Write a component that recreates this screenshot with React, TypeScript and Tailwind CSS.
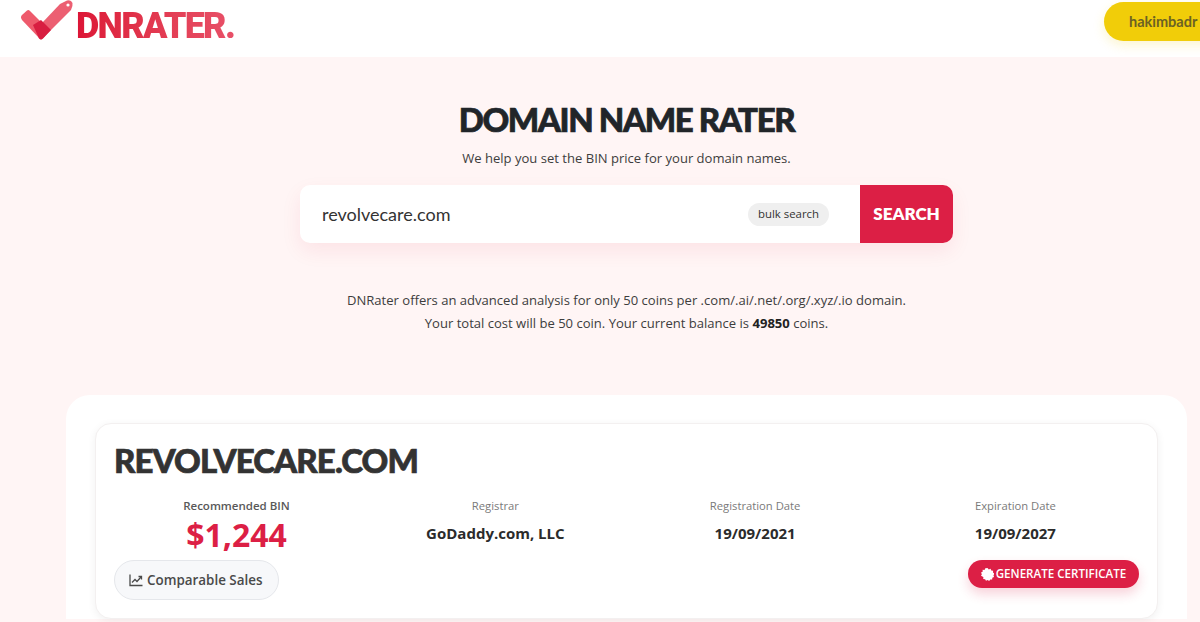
import React from "react";

function Logo() {
  return (
    <svg width="54" height="42" viewBox="0 0 54 42" className="shrink-0">
      <path d="M1 15 L6 10.500 Q7.500 9.500 9 11 L21 23 L24 36 L21 39 Q20 40 18.500 38.500 L1 20 Q-1 17 1 15Z" fill="#ee5a6c" />
      <path d="M21 23 L39 4 L46 0.500 Q48 0 50 1 L51.500 3 Q52 6 50 10 L24 36 Q21 39 19 38Z" fill="#ec5f72" />
      <path d="M12 25 L20 20 L30 30 L22 38.500 Q20 40.500 18 38.500 Z" fill="#d81e41" />
      <circle cx="47" cy="5" r="1.600" fill="#fff" />
    </svg>
  );
}

function Stat({ label, value }: { label: string; value: string }) {
  return (
    <div className="flex flex-col items-center">
      <div className="text-[11.250px] leading-[18px] text-[#7a7a7a]">{label}</div>
      <div className="mt-[6px] text-[15px] leading-[24px] font-bold text-[#2b2b2b]">{value}</div>
    </div>
  );
}

export default function App() {
  return (
    <div className="h-[622px] overflow-hidden bg-[#fff5f5] font-['Open_Sans',sans-serif] text-[#333]">
      <header className="flex h-[57px] items-start justify-between overflow-hidden bg-white pl-[21px]">
        <div className="flex items-start">
          <Logo />
          <span className="mt-[8px] ml-[1px] bg-gradient-to-r from-[#dc1436] to-[#e85068] bg-clip-text font-['Roboto',sans-serif] text-[36px] leading-[36px] font-black tracking-[-1.700px] text-transparent">
            DNRATER.
          </span>
        </div>
        <div className="mt-[2px] mr-[-30px] flex h-[39px] w-[126px] items-center rounded-[20px] bg-[#f1cd09] pl-[25px] font-['Lato',sans-serif] text-[14.500px] font-bold text-[#6b6224] shadow-[0_4px_12px_rgba(241,205,9,0.2)]">
          hakimbadr
        </div>
      </header>

      <main className="mr-[13px] ml-[66px] flex flex-col items-center">
        <h1 className="mt-[42px] font-['Lato',sans-serif] text-[33px] leading-[40px] font-black tracking-[-1.400px] text-[#212529] [-webkit-text-stroke:0.7px_#212529]">
          DOMAIN NAME RATER
        </h1>
        <p className="mt-[9px] text-[13.050px] leading-[21px] text-[#3d3d3d]">
          We help you set the BIN price for your domain names.
        </p>

        <div className="mt-[16px] flex h-[58px] w-[653px] rounded-[10px] bg-white shadow-[0_8px_20px_rgba(220,30,70,0.08)]">
          <div className="flex flex-1 items-center justify-between pr-[31px] pl-[22px]">
            <span className="font-['Lato',sans-serif] text-[18px] text-[#333]">revolvecare.com</span>
            <span className="flex h-[23px] items-center rounded-full bg-[#efefef] px-[10px] text-[11.400px] text-[#333]">
              bulk search
            </span>
          </div>
          <div className="flex w-[93px] items-center justify-center rounded-r-[10px] bg-[#dc1f45] font-['Lato',sans-serif] text-[17px] font-extrabold text-white">
            SEARCH
          </div>
        </div>

        <p className="mt-[46px] text-center text-[13.050px] leading-[23px] text-[#3d3d3d]">
          DNRater offers an advanced analysis for only 50 coins per .com/.ai/.net/.org/.xyz/.io domain.
          <br />
          Your total cost will be 50 coin. Your current balance is <b className="text-[#222]">49850</b> coins.
        </p>

        <section className="mt-[60px] self-stretch rounded-t-[24px] bg-white px-[29px] pt-[28px]">
          <div className="h-[196px] rounded-[16px] border border-[#f3f0f0] bg-white px-[18px] pt-[17px] shadow-[0_2px_8px_rgba(0,0,0,0.06)]">
            <h2 className="font-['Lato',sans-serif] text-[33px] leading-[38px] font-black tracking-[-0.900px] text-[#333] [-webkit-text-stroke:0.7px_#333]">
              REVOLVECARE.COM
            </h2>
            <div className="mt-[18px] grid grid-cols-4">
              <div className="flex flex-col">
                <div className="flex w-[245px] flex-col items-center self-start">
                  <div className="text-[11.500px] leading-[18px] font-semibold text-[#595959]">Recommended BIN</div>
                  <div className="mt-[1px] text-[32px] leading-[38px] font-bold text-[#dc1f45]">$1,244</div>
                </div>
                <div className="mt-[6px] flex h-[40px] w-[165px] items-center gap-[4px] rounded-full border border-[#e5e7eb] bg-[#f7f8fa] pl-[14px] text-[13.400px] font-semibold whitespace-nowrap text-[#4a4a4a]">
                  <svg width="14" height="14" viewBox="0 0 14 14" fill="none" stroke="#4a4a4a" strokeWidth="1.300">
                    <path d="M1 1.500 V12.500 H13.500" />
                    <path d="M3 9.500 L6 6.500 L8 8.500 L12 4" />
                    <path d="M9.500 3.500 H12.500 V6.500" />
                  </svg>
                  Comparable Sales
                </div>
              </div>
              <div className="ml-[-6px]"><Stat label="Registrar" value="GoDaddy.com, LLC" /></div>
              <div className="ml-[1px]"><Stat label="Registration Date" value="19/09/2021" /></div>
              <div className="relative ml-[9px]">
                <Stat label="Expiration Date" value="19/09/2027" />
                <div className="absolute top-[63px] right-0 flex h-[28px] w-[171px] items-center justify-center gap-[2px] rounded-full bg-[#dc1f45] text-[11.600px] font-semibold text-white shadow-[0_6px_12px_rgba(220,31,69,0.2)]">
                  <svg width="13" height="13" viewBox="0 0 24 24" fill="#fff">
                    <path d="M12 0l2.400 2.600 3.300-1.200 1.200 3.300 3.500.3-.3 3.500 2.900 2-2 2.900 1.200 3.300-3.300 1.200-.3 3.500-3.500-.3-2 2.900-2.900-2-3 1.600-1.600-3-3.500-.3.3-3.500L0 14.400l1.600-3L0 8.400l3-1.600L3 3.300l3.500.3L8 .4z" />
                  </svg>
                  GENERATE CERTIFICATE
                </div>
              </div>
            </div>
          </div>
        </section>
      </main>
    </div>
  );
}
